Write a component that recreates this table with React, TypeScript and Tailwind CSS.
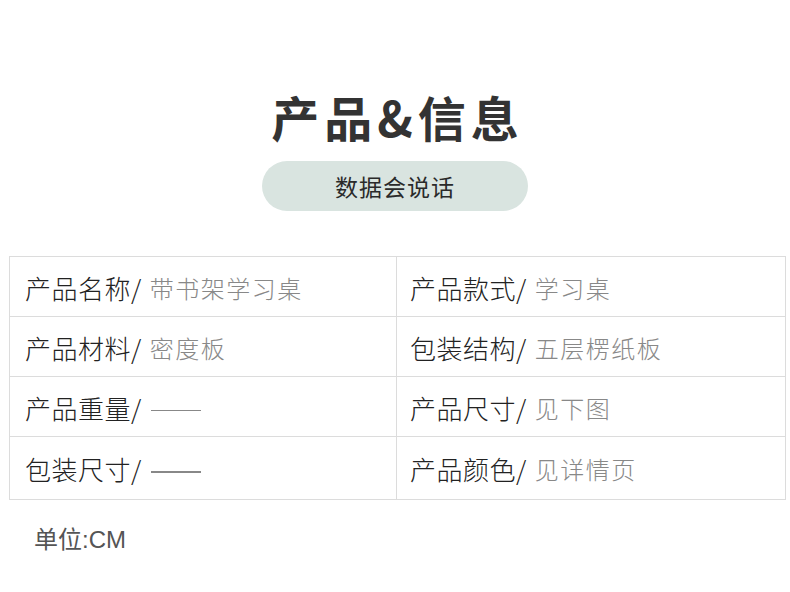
import React from "react";

const font = { fontFamily: '"Noto Sans CJK SC", "Noto Sans", sans-serif' };

const rows: [string, string, string, string][] = [
  ["产品名称/", "带书架学习桌", "产品款式/", "学习桌"],
  ["产品材料/", "密度板", "包装结构/", "五层楞纸板"],
  ["产品重量/", "", "产品尺寸/", "见下图"],
  ["包装尺寸/", "", "产品颜色/", "见详情页"],
];

function Cell({ label, value, right }: { label: string; value: string; right?: boolean }) {
  return (
    <div className={`flex items-center pt-[2px] ${right ? "pl-[13px]" : "pl-[15px]"}`}>
      <span className="text-[26px] font-light text-[#222] leading-none tracking-[0.5px]">{label}</span>
      {value ? (
        <span className="ml-[8px] text-[24px] font-light text-[#888] leading-none tracking-[1.5px]">{value}</span>
      ) : (
        <span className="ml-[9px] mt-[6px] block w-[50px] h-[1.5px] bg-[#888]" />
      )}
    </div>
  );
}

export default function App() {
  return (
    <div className="w-[790px] h-[592px] bg-white overflow-hidden" style={font}>
      <div className="flex flex-col items-center pt-[92px]">
        <h1 className="text-[48px] font-bold text-[#333] leading-none tracking-[5px] pl-[5px]">产品&amp;信息</h1>
        <div className="mt-[21px] w-[266px] h-[50px] rounded-full bg-[#d9e4e0] flex items-center justify-center">
          <span className="text-[23px] font-normal text-[#2a2a2a] leading-none tracking-[1px]">数据会说话</span>
        </div>
      </div>
      <div className="mx-[9px] mt-[45px] w-[777px] border border-[#dcdcdc]">
        {rows.map((r, i) => (
          <div
            key={i}
            className={`grid grid-cols-[387px_1fr] ${i < 3 ? "h-[60px] border-b border-[#dcdcdc]" : "h-[62px]"}`}
          >
            <div className="border-r border-[#dcdcdc] flex">
              <Cell label={r[0]} value={r[1]} />
            </div>
            <div className="flex">
              <Cell label={r[2]} value={r[3]} right />
            </div>
          </div>
        ))}
      </div>
      <div className="pl-[34px] mt-[26px] text-[24px] text-[#555] leading-none">
        单位<span style={{ fontFamily: '"Liberation Sans", sans-serif' }}>:CM</span>
      </div>
    </div>
  );
}
